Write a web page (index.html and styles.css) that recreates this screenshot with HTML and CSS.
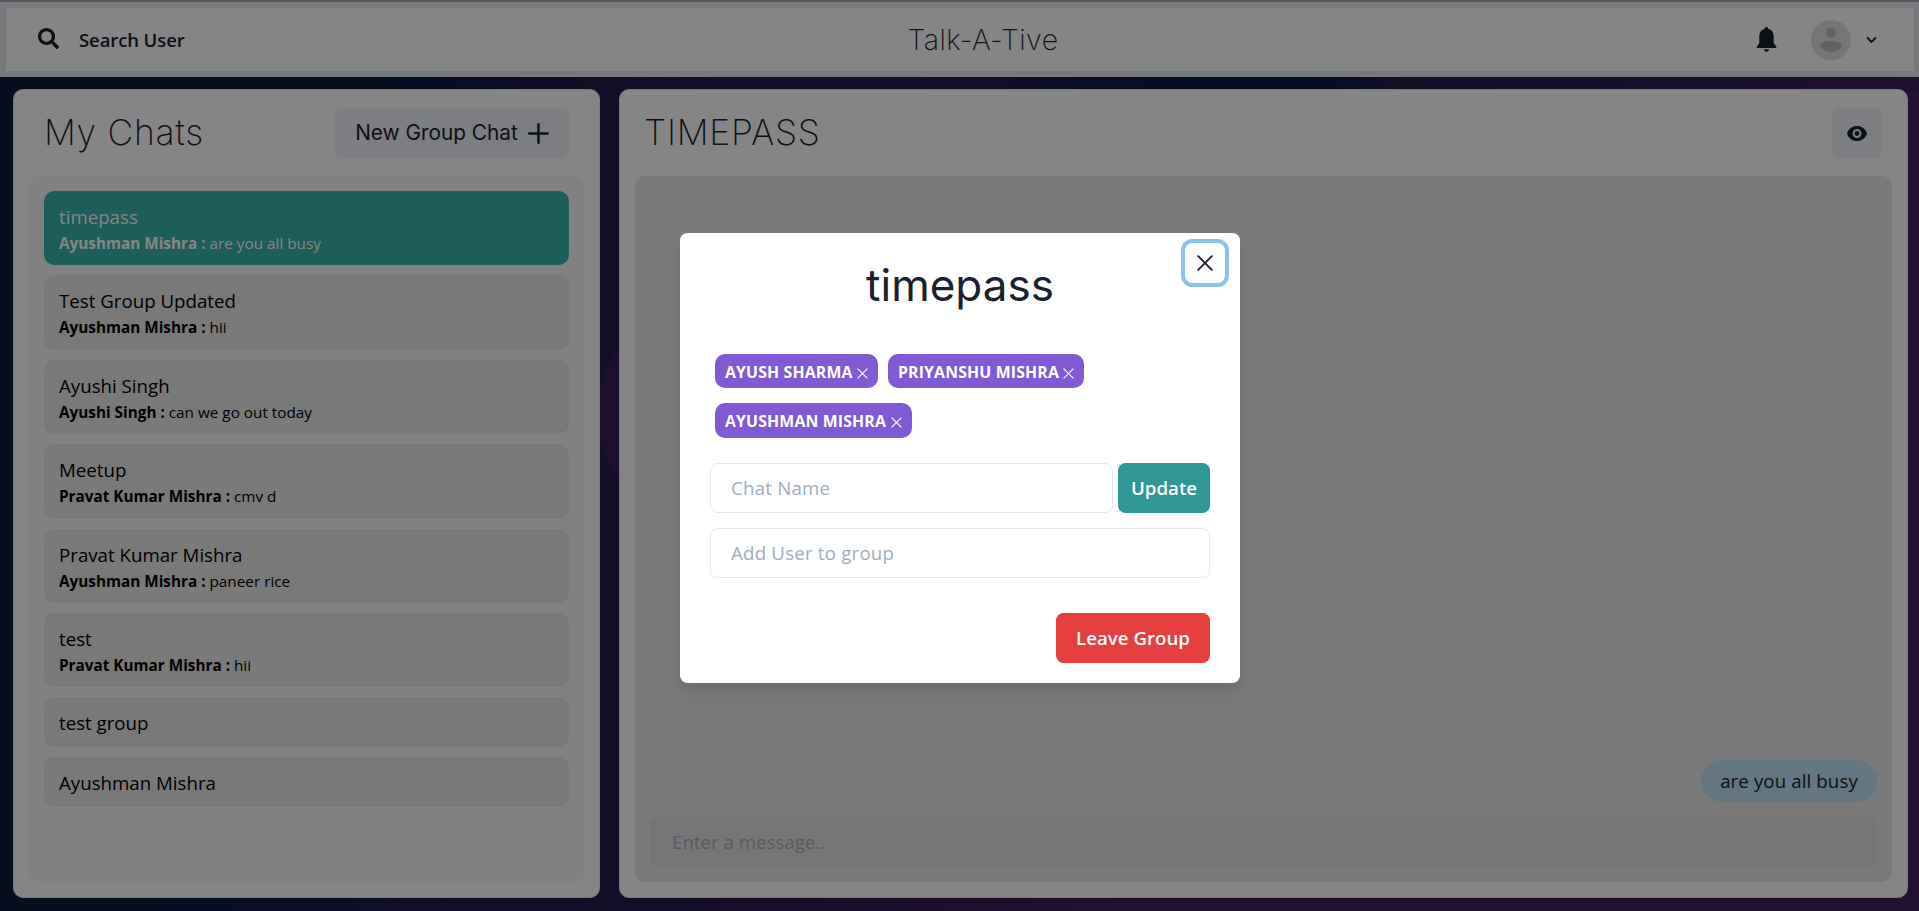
FILE: index.html
```html
<!DOCTYPE html>
<html lang="en">
<head>
<meta charset="utf-8">
<title>Talk-A-Tive</title>
<link rel="stylesheet" href="styles.css">
</head>
<body>
<div class="app">
  <header class="topbar">
    <div class="search"><svg class="search-icon" viewBox="0 0 512 512"><path fill="currentColor" d="M505 442.7L405.3 343c-4.500-4.500-10.600-7-17-7H372c27.600-35.300 44-79.700 44-128C416 93.100 322.900 0 208 0S0 93.100 0 208s93.100 208 208 208c48.300 0 92.700-16.400 128-44v16.300c0 6.400 2.500 12.500 7 17l99.700 99.700c9.400 9.400 24.600 9.400 33.900 0l28.300-28.300c9.400-9.400 9.400-24.600.1-34zM208 336c-70.700 0-128-57.200-128-128 0-70.700 57.200-128 128-128 70.700 0 128 57.200 128 128 0 70.700-57.200 128-128 128z"/></svg><span class="search-label">Search User</span></div>
    <h1 class="brand">Talk-A-Tive</h1>
    <div class="account">
      <svg class="bell" viewBox="0 0 20 26"><path fill="currentColor" d="M10 0c1 0 1.600.7 1.600 1.700C15.300 2.500 17.200 5.700 17.200 9.500v6.200c0 1.500 2.800 3 2.800 5.300H0c0-2.300 2.800-3.800 2.800-5.300V9.500c0-3.800 1.900-7 5.600-7.800C8.400.7 9 0 10 0zM7.500 22.300h5c0 1.500-1.100 2.500-2.500 2.500s-2.500-1-2.500-2.500z"/></svg>
      <svg class="avatar" viewBox="0 0 40 40"><circle cx="20" cy="20" r="20" fill="#e0e0e0"/><circle cx="20" cy="12.800" r="5.300" fill="#bdbdbd"/><path fill="#bdbdbd" d="M9 25.500C9 22.500 15 21 20 21s11 1.500 11 4.500C29 29.500 25 32 20 32S11 29.500 9 25.500z"/></svg>
      <svg class="chevron" viewBox="0 0 10 7"><path d="M1 1.200l4 4 4-4" fill="none" stroke="currentColor" stroke-width="1.700"/></svg>
    </div>
  </header>
  <main class="panels">
    <section class="panel chats">
      <div class="panel-head"><h2 class="heading my-chats">My Chats</h2><button class="btn new-group"><span>New Group Chat</span><svg class="plus" viewBox="0 0 21 21"><path d="M10.500 1.200v18.600M1.200 10.500h18.600" stroke="currentColor" stroke-width="2.400" stroke-linecap="round"/></svg></button></div>
      <ul class="chat-list">
        <li class="chat active"><p class="name">timepass</p><p class="last"><b>Ayushman Mishra :</b> are you all busy</p></li>
        <li class="chat"><p class="name">Test Group Updated</p><p class="last"><b>Ayushman Mishra :</b> hii</p></li>
        <li class="chat"><p class="name">Ayushi Singh</p><p class="last"><b>Ayushi Singh :</b> can we go out today</p></li>
        <li class="chat"><p class="name">Meetup</p><p class="last"><b>Pravat Kumar Mishra :</b> cmv d</p></li>
        <li class="chat"><p class="name">Pravat Kumar Mishra</p><p class="last"><b>Ayushman Mishra :</b> paneer rice</p></li>
        <li class="chat"><p class="name">test</p><p class="last"><b>Pravat Kumar Mishra :</b> hii</p></li>
        <li class="chat"><p class="name">test group</p></li>
        <li class="chat"><p class="name">Ayushman Mishra</p></li>
      </ul>
    </section>
    <section class="panel room">
      <div class="panel-head"><h2 class="heading room-title">TIMEPASS</h2><button class="btn eye"><svg class="eye-icon" viewBox="0 0 20 15"><path fill="currentColor" fill-rule="evenodd" d="M10 0C5.400 0 1.600 2.600 0 7.500 1.600 12.400 5.400 15 10 15s8.400-2.600 10-7.500C18.400 2.600 14.600 0 10 0zm0 12a4.500 4.500 0 110-9 4.500 4.500 0 010 9z"/><circle cx="10" cy="7.500" r="2.400" fill="currentColor"/></svg></button></div>
      <div class="messages">
        <div class="bubble">are you all busy</div>
        <div class="composer">Enter a message..</div>
      </div>
    </section>
  </main>
</div>
<div class="overlay">
  <div class="modal">
    <button class="close"><svg class="close-icon" viewBox="0 0 16 16"><path d="M1.200 1.200l13.600 13.600M14.800 1.200L1.200 14.800" stroke="currentColor" stroke-width="1.900" stroke-linecap="round"/></svg></button>
    <h2 class="modal-title">timepass</h2>
    <div class="tags">
      <span class="tag t1"><span class="tag-text">AYUSH SHARMA</span><svg class="x" viewBox="0 0 11 11"><path d="M.6.6l9.800 9.800M10.400.6L.6 10.400" stroke="currentColor" stroke-width="1.200"/></svg></span>
      <span class="tag t2"><span class="tag-text">PRIYANSHU MISHRA</span><svg class="x" viewBox="0 0 11 11"><path d="M.6.6l9.800 9.800M10.400.6L.6 10.400" stroke="currentColor" stroke-width="1.200"/></svg></span>
      <span class="tag t3"><span class="tag-text">AYUSHMAN MISHRA</span><svg class="x" viewBox="0 0 11 11"><path d="M.6.6l9.800 9.800M10.400.6L.6 10.400" stroke="currentColor" stroke-width="1.200"/></svg></span>
    </div>
    <div class="rename"><div class="field">Chat Name</div><button class="action update">Update</button></div>
    <div class="field">Add User to group</div>
    <button class="action leave">Leave Group</button>
  </div>
</div>
</body>
</html>
```
FILE: styles.css
```css
* { box-sizing: border-box; margin: 0; padding: 0; }
html { overflow: hidden; }
body { height: 911px; overflow: hidden; font-family: "Open Sans", "Noto Sans", sans-serif; font-size: 18.7px; line-height: 30px; color: #1a202c; }
button { border: 0; font: inherit; color: inherit; display: flex; align-items: center; justify-content: center; }
svg { display: block; flex: none; }
.app { height: 911px; display: flex; flex-direction: column; border-top: 2px solid #a3a3a3;
  background:
    linear-gradient(90deg, #0c1b3e 0%, #0d1b40 22%, #221a45 31%, #251c4a 45%, #0d1b40 63%, #0e1c40 69%, #1f1d46 73%, #2b1d50 88%, #3c1f58 100%) 0 0 / 100% 90px no-repeat,
    radial-gradient(circle 102px at 697px 412px, #371c55 98%, transparent 100%),
    linear-gradient(90deg, #0c1b3e 0%, #0d1b40 9%, #201d48 22%, #271b4c 33%, #331b50 45%, #45215a 60%, #41215c 100%); }
.topbar { height: 75px; flex: none; background: #fff; border: 6px solid #e2e8f0; border-right-width: 5px; display: flex; justify-content: space-between; align-items: center; padding: 0 37px 0 32px; }
.search { display: flex; align-items: center; gap: 20px; width: 245px; }
.search-icon { width: 21px; height: 21px; margin-top: -3px; }
.search-label { font-weight: 600; font-size: 18.500px; letter-spacing: -.1px; }
.brand { font: 250 28.500px/45px Inter, sans-serif; letter-spacing: .4px; margin-left: 51px; }
.account { display: flex; align-items: center; justify-content: flex-end; width: 245px; }
.bell { width: 21px; height: 26px; margin-right: 34px; }
.avatar { width: 40px; height: 40px; margin-right: 15px; }
.chevron { width: 11px; height: 8px; }
.panels { flex: 1; display: flex; justify-content: space-between; padding: 12px 11px 13px 13px; min-height: 0; }
.panel { background: #fff; border: 1px solid #e2e8f0; border-radius: 10px; padding: 18px 15px 15px; display: flex; flex-direction: column; }
.chats { width: 587px; }
.room { width: 1289px; }
.panel-head { height: 50px; margin-bottom: 18px; display: flex; justify-content: space-between; align-items: center; flex: none; padding: 0 15px; }
.room .panel-head { padding: 0 10px 0 9px; }
.heading { font: 250 35.500px/56px Inter, sans-serif; letter-spacing: .7px; }
.btn { height: 50px; background: #edf2f7; border-radius: 7.500px; }
.new-group { width: 234px; gap: 10px; font: 400 20.800px/30px Inter, sans-serif; letter-spacing: 0; }
.plus { width: 21px; height: 21px; }
.eye { width: 50px; }
.eye-icon { width: 20px; height: 15px; }
.chat-list { list-style: none; flex: 1; background: #f8f8f8; border-radius: 10px; padding: 15px; display: flex; flex-direction: column; gap: 10px; }
.chat { background: #e8e8e8; border-radius: 10px; padding: 10px 15px; color: #000; }
.chat.active { background: #38b2ac; color: #fff; }
.name { padding-top: 1px; margin-bottom: -1px; }
.last { font-size: 15.300px; line-height: 24.400px; }
.messages { flex: 1; background: #e8e8e8; border-radius: 10px; padding: 15px; display: flex; flex-direction: column; justify-content: flex-end; align-items: flex-end; gap: 15px; }
.bubble { background: #bee3f8; border-radius: 25px; height: 42px; width: 176px; text-align: center; line-height: 42px; letter-spacing: .1px; }
.composer { width: 100%; height: 50px; background: #e0e0e0; border-radius: 7.500px; padding: 0 22px; line-height: 50px; color: #a0aec0; }
.overlay { position: absolute; inset: 0; background: rgba(0,0,0,.48); display: flex; align-items: flex-start; justify-content: center; padding: 233px 0 0 1px; }
.modal { position: relative; width: 560px; height: 450px; background: #fff; border-radius: 7.500px; padding: 20px 30px; display: flex; flex-direction: column; box-shadow: 0 12px 19px -4px rgba(0,0,0,.1), 0 5px 8px -2px rgba(0,0,0,.05); }
.close { position: absolute; top: 10px; right: 15px; width: 40px; height: 40px; border-radius: 7.500px; background: #fff; box-shadow: 0 0 0 4px #8ec2ed; }
.close-icon { width: 16px; height: 16px; }
.modal-title { font: 400 44px/64px Inter, sans-serif; text-align: center; margin-bottom: 32px; }
.tags { display: flex; flex-wrap: wrap; column-gap: 10px; row-gap: 15px; padding: 5px 5px 0; margin-bottom: 25px; }
.tag { height: 34px; border-radius: 10px; background: #805ad5; color: #fff; display: flex; align-items: center; justify-content: space-between; padding: 0 10px; font-weight: 700; font-size: 15.800px; letter-spacing: .17px; }
.t1 { width: 163px; } .t2 { width: 196px; } .t3 { width: 197px; height: 35px; }
.tag-text { white-space: nowrap; padding-top: 1px; }
.x { width: 11px; height: 11px; margin-top: 4px; }
.rename { display: flex; gap: 5px; margin-bottom: 15px; }
.field { flex: none; height: 50px; border: 1px solid #e2e8f0; border-radius: 7.500px; padding: 0 20px; line-height: 48px; letter-spacing: .2px; color: #a0aec0; }
.rename .field { width: 403px; }
.action { height: 50px; border-radius: 7.500px; color: #fff; font-weight: 600; }
.update { width: 92px; background: #319795; }
.leave { width: 154px; background: #e53e3e; align-self: flex-end; margin-top: 35px; }
```
